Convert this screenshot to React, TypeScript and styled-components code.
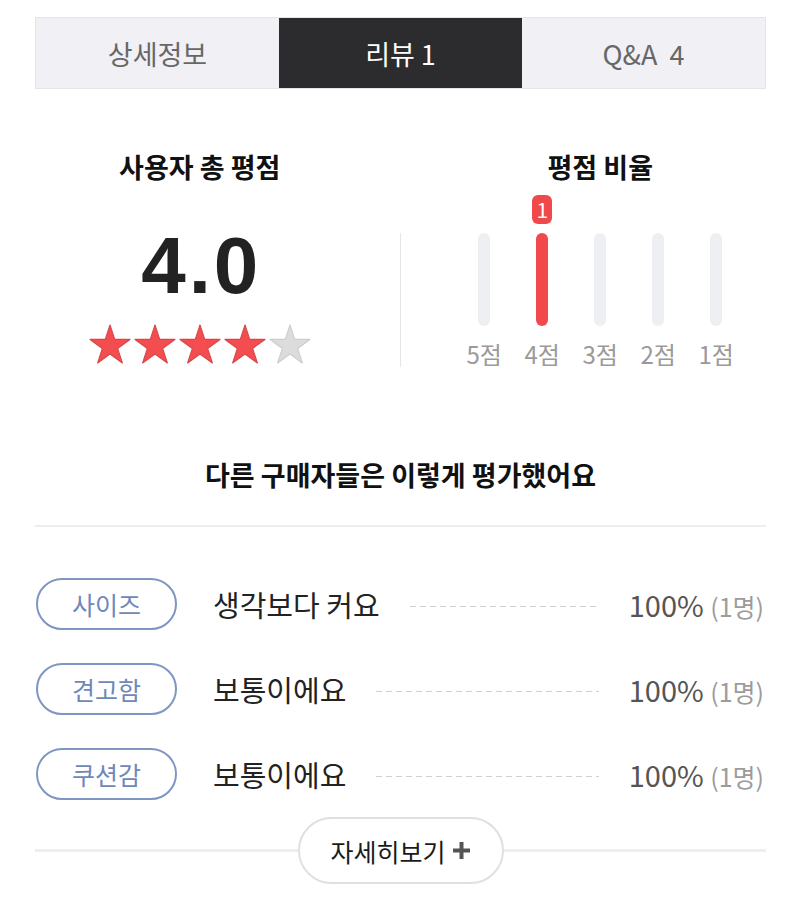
import React from 'react';
import styled, { createGlobalStyle } from 'styled-components';

const GlobalStyle = createGlobalStyle`
  body {
    margin: 0;
    background: #ffffff;
    font-family: 'Noto Sans CJK KR', 'Noto Sans', sans-serif;
  }
`;

const Page = styled.div`
  width: 800px;
  padding-top: 17px;
  padding-bottom: 14px;
  box-sizing: border-box;
`;

const TabBar = styled.div`
  display: flex;
  margin: 0 34px 0 35px;
  border: 1px solid #e4e4ea;
`;

const Tab = styled.div<{ active?: boolean }>`
  flex: 1;
  height: 70px;
  display: flex;
  align-items: center;
  justify-content: center;
  font-size: 27px;
  white-space: pre;
  background-color: ${props => (props.active ? '#2c2c2e' : '#f0f0f5')};
  color: ${props => (props.active ? '#ffffff' : '#676767')};
`;

const Summary = styled.div`
  display: grid;
  grid-template-columns: 1fr 1px 1fr;
  margin-top: 62px;
`;

const Column = styled.div`
  display: flex;
  flex-direction: column;
  align-items: center;
`;

const Title = styled.div`
  font-size: 27px;
  font-weight: 700;
  line-height: 32px;
  color: #111111;
`;

const Score = styled.div`
  margin-top: 43px;
  font-family: 'Liberation Sans', Arial, sans-serif;
  font-size: 80px;
  font-weight: 700;
  line-height: 80px;
  letter-spacing: 3px;
  padding-left: 3px;
  color: #222222;
`;

const Stars = styled.div`
  display: flex;
  gap: 3px;
  margin-top: 18px;
`;

const Divider = styled.div`
  margin-top: 82px;
  height: 134px;
  background-color: #e6e6e6;
`;

const Chart = styled.div`
  display: flex;
  margin-top: 12px;
`;

const BarColumn = styled.div`
  width: 58px;
  display: flex;
  flex-direction: column;
  align-items: center;
`;

const Badge = styled.div<{ show: boolean }>`
  visibility: ${props => (props.show ? 'visible' : 'hidden')};
  width: 20px;
  height: 29px;
  border-radius: 6px;
  background-color: #f0484b;
  color: #ffffff;
  font-size: 21px;
  line-height: 29px;
  text-align: center;
`;

const Bar = styled.div<{ filled: boolean }>`
  margin-top: 9px;
  width: 12px;
  height: 93px;
  border-radius: 6px;
  background-color: ${props => (props.filled ? '#f2494c' : '#eeeff3')};
`;

const BarLabel = styled.div`
  margin-top: 14px;
  font-size: 24px;
  line-height: 28px;
  color: #9a9a9a;
`;

const SectionTitle = styled.div`
  margin: 91px 34px 0 35px;
  padding-bottom: 34px;
  border-bottom: 2px solid #ededed;
  text-align: center;
  font-size: 27px;
  font-weight: 700;
  line-height: 32px;
  color: #111111;
`;

const List = styled.div`
  display: flex;
  flex-direction: column;
  gap: 33px;
  margin-top: 51px;
  padding: 0 36px;
`;

const Row = styled.div`
  display: flex;
  align-items: center;
  height: 52px;
`;

const Pill = styled.div`
  flex: none;
  width: 141px;
  height: 52px;
  box-sizing: border-box;
  border: 2px solid #7f96c3;
  border-radius: 26px;
  display: flex;
  align-items: center;
  justify-content: center;
  font-size: 25px;
  color: #6f88b9;
`;

const Answer = styled.div`
  margin-left: 36px;
  font-size: 29px;
  color: #222222;
`;

const Dash = styled.div`
  flex: 1;
  height: 1px;
  margin: 4px 30px 0;
  background: repeating-linear-gradient(
    to right,
    #cfcfcf 0 6px,
    transparent 6px 10px
  );
`;

const Percent = styled.div`
  font-size: 29px;
  color: #555555;
  white-space: nowrap;

  span {
    font-size: 25px;
    color: #9c9c9c;
  }
`;

const MoreWrap = styled.div`
  display: flex;
  align-items: center;
  margin: 17px 34px 0 35px;
`;

const MoreLine = styled.div`
  flex: 1;
  height: 3px;
  background-color: #eeeeee;
`;

const MoreButton = styled.button`
  width: 206px;
  height: 67px;
  box-sizing: border-box;
  border: 2px solid #e0e0e0;
  border-radius: 34px;
  background-color: #ffffff;
  display: flex;
  align-items: center;
  justify-content: center;
  gap: 6px;
  font-family: 'Noto Sans CJK KR', sans-serif;
  font-size: 25px;
  color: #1a1a1a;
  padding: 0;
`;

const Star = ({ filled }: { filled: boolean }) => (
  <svg width="42" height="41" viewBox="0 0 44 42">
    <path
      d="M22 0.5 L26.94 15.7 L42.92 15.7 L29.99 25.1 L34.94 40.3 L22 30.9 L9.06 40.3 L14.01 25.1 L1.08 15.7 L17.06 15.7 Z"
      fill={filled ? '#f44d4f' : '#dcdcdc'}
      stroke={filled ? '#d6474a' : '#cdcdcd'}
      strokeWidth="1.2"
      strokeLinejoin="round"
    />
  </svg>
);

const Plus = () => (
  <svg width="19" height="19" viewBox="0 0 19 19">
    <path d="M9.5 1 V18 M1 9.5 H18" stroke="#555555" strokeWidth="4" />
  </svg>
);

const ratings = [
  { label: '5점', count: 0 },
  { label: '4점', count: 1 },
  { label: '3점', count: 0 },
  { label: '2점', count: 0 },
  { label: '1점', count: 0 },
];

const feedback = [
  { topic: '사이즈', answer: '생각보다 커요' },
  { topic: '견고함', answer: '보통이에요' },
  { topic: '쿠션감', answer: '보통이에요' },
];

export default function App() {
  return (
    <Page>
      <GlobalStyle />
      <TabBar>
        <Tab>상세정보</Tab>
        <Tab active>리뷰 1</Tab>
        <Tab>Q&amp;A  4</Tab>
      </TabBar>

      <Summary>
        <Column>
          <Title>사용자 총 평점</Title>
          <Score>4.0</Score>
          <Stars>
            {[1, 2, 3, 4, 5].map(n => (
              <Star key={n} filled={n <= 4} />
            ))}
          </Stars>
        </Column>
        <Divider />
        <Column>
          <Title>평점 비율</Title>
          <Chart>
            {ratings.map(r => (
              <BarColumn key={r.label}>
                <Badge show={r.count > 0}>{r.count}</Badge>
                <Bar filled={r.count > 0} />
                <BarLabel>{r.label}</BarLabel>
              </BarColumn>
            ))}
          </Chart>
        </Column>
      </Summary>

      <SectionTitle>다른 구매자들은 이렇게 평가했어요</SectionTitle>

      <List>
        {feedback.map(f => (
          <Row key={f.topic}>
            <Pill>{f.topic}</Pill>
            <Answer>{f.answer}</Answer>
            <Dash />
            <Percent>
              100% <span>(1명)</span>
            </Percent>
          </Row>
        ))}
      </List>

      <MoreWrap>
        <MoreLine />
        <MoreButton>
          자세히보기
          <Plus />
        </MoreButton>
        <MoreLine />
      </MoreWrap>
    </Page>
  );
}
